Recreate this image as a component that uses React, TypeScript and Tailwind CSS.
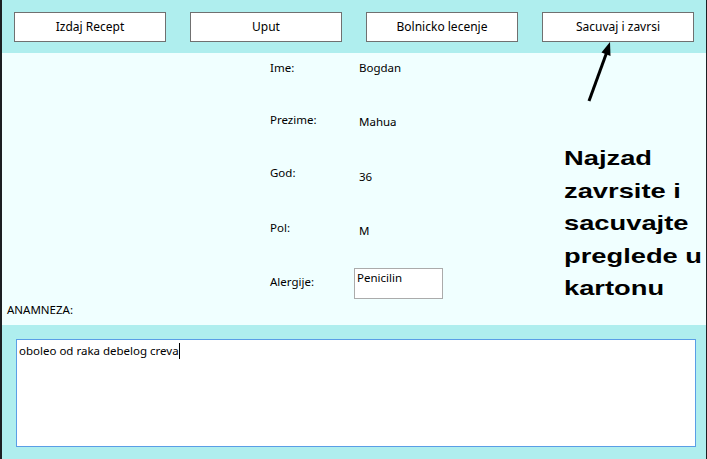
import React from "react";

const ui = { fontFamily: '"Noto Sans", "Open Sans", sans-serif' };

function Btn({ label }: { label: string }) {
  return (
    <div className="w-[152px] h-[30px] bg-white border border-[#707070] flex items-center justify-center text-[12px] text-black">
      {label}
    </div>
  );
}

export default function App() {
  return (
    <div className="relative w-[707px] h-[459px] flex overflow-hidden" style={ui}>
      <div className="w-[2px] bg-[#1c1f22]" />
      <div className="flex-1 flex flex-col">
        {/* top band */}
        <div className="h-[53px] bg-[#afeeee] flex items-start justify-between px-[12px] pt-[12px]">
          <Btn label="Izdaj Recept" />
          <Btn label="Uput" />
          <Btn label="Bolnicko lecenje" />
          <Btn label="Sacuvaj i zavrsi" />
        </div>
        {/* middle */}
        <div className="h-[272px] bg-[#f0ffff] flex flex-col pt-[7px] text-[11.5px] leading-[16px] text-black">
          <div className="h-[52px] flex pl-[268px]">
            <div className="w-[89px]">Ime:</div>
            <div>Bogdan</div>
          </div>
          <div className="h-[53px] flex pl-[268px]">
            <div className="w-[89px]">Prezime:</div>
            <div className="mt-[2px]">Mahua</div>
          </div>
          <div className="h-[55px] flex pl-[268px]">
            <div className="w-[89px]">God:</div>
            <div className="mt-[4px]">36</div>
          </div>
          <div className="h-[48px] flex pl-[268px]">
            <div className="w-[89px]">Pol:</div>
            <div className="mt-[3px]">M</div>
          </div>
          <div className="h-[31px] flex pl-[268px]">
            <div className="w-[84px] pt-[6px]">Alergije:</div>
            <div className="w-[89px] h-[31px] bg-white border border-[#ababab] px-[2px] pt-[1px]">Penicilin</div>
          </div>
          <div className="mt-[3px] pl-[5px]">ANAMNEZA:</div>
        </div>
        {/* bottom */}
        <div className="flex-1 bg-[#afeeee] pt-[14px] pl-[14px] pr-[10px]">
          <div className="h-[108px] bg-white border border-[#5a9ee6] px-[2px] pt-[3px] text-[11.5px] leading-[16px] text-black flex items-start">
            <span>oboleo od raka debelog creva</span>
            <span className="inline-block w-[1px] h-[16px] bg-black" />
          </div>
        </div>
      </div>
      <div className="w-[1px] bg-[#1c1f22]" />

      {/* annotation overlay */}
      <svg className="absolute left-0 top-0 pointer-events-none" width="707" height="459">
        <line x1="589" y1="101" x2="606.5" y2="53" stroke="#000" strokeWidth="3" />
        <polygon points="610,42 610.5,56 601.5,52.5" fill="#000" />
      </svg>
      <div
        className="absolute left-[564px] top-[142px] origin-left scale-x-[1.3] text-[21px] leading-[32.5px] font-bold text-black whitespace-nowrap"
        style={{ fontFamily: '"Liberation Sans", Arial, sans-serif' }}
      >
        <div>Najzad</div>
        <div>zavrsite i</div>
        <div>sacuvajte</div>
        <div>preglede u</div>
        <div>kartonu</div>
      </div>
    </div>
  );
}
